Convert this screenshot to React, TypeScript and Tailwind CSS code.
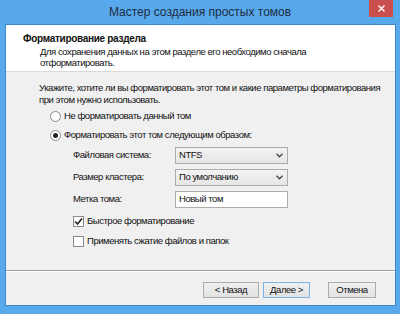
import React from "react";

const font = { fontFamily: '"Liberation Sans", Arial, sans-serif' };

function Radio({ checked, label }: { checked?: boolean; label: string }) {
  return (
    <div className="flex items-center h-[14px] gap-[3px]">
      <div className="w-[11px] h-[11px] rounded-full border border-[#8a8a8a] bg-white flex items-center justify-center">
        {checked && <div className="w-[5px] h-[5px] rounded-full bg-[#222]" />}
      </div>
      <span>{label}</span>
    </div>
  );
}

function Check({ checked, label }: { checked?: boolean; label: string }) {
  return (
    <div className="flex items-center h-[14px] gap-[3px]">
      <div className="w-[11px] h-[11px] border border-[#8a8a8a] bg-white flex items-center justify-center">
        {checked && (
          <svg width="9" height="9" viewBox="0 0 9 9">
            <path d="M1 4.5 L3.5 7 L8 1.5" stroke="#222" strokeWidth="1.6" fill="none" />
          </svg>
        )}
      </div>
      <span>{label}</span>
    </div>
  );
}

function Chevron() {
  return (
    <svg width="7" height="5" viewBox="0 0 7 5">
      <path d="M0.5 0.8 L3.5 3.8 L6.5 0.8" stroke="#444" strokeWidth="1.3" fill="none" />
    </svg>
  );
}

function Select({ value }: { value: string }) {
  return (
    <div className="w-[113px] h-[17px] border border-[#acacac] bg-gradient-to-b from-[#f3f3f3] to-[#e6e6e6] flex items-center justify-between pl-[3px] pr-[4px]">
      <span>{value}</span>
      <Chevron />
    </div>
  );
}

function Btn({ label, w, def }: { label: string; w: string; def?: boolean }) {
  return (
    <div
      className={`${w} h-[16px] border ${def ? "border-[#7fb2e6]" : "border-[#acacac]"} bg-gradient-to-b from-[#f0f0f0] to-[#e2e2e2] flex items-center justify-center`}
    >
      {label}
    </div>
  );
}

export default function App() {
  return (
    <div
      className="w-[400px] h-[314px] bg-[#58a8ec] flex flex-col text-[9.5px] tracking-[-0.45px] text-[#111] whitespace-nowrap"
      style={font}
    >
      <div className="h-[24px] relative flex items-center justify-center shrink-0">
        <span className="text-[12px] tracking-normal text-[#1c2c3e]">Мастер создания простых томов</span>
        <div className="absolute top-0 right-[7px] w-[24px] h-[17px] bg-[#c9504f] flex items-center justify-center">
          <svg width="7" height="7" viewBox="0 0 7 7">
            <path d="M0.5 0.5 L6.5 6.5 M6.5 0.5 L0.5 6.5" stroke="#fff" strokeWidth="1.4" />
          </svg>
        </div>
      </div>
      <div className="flex-1 ml-[5px] mr-[4px] mb-[8px] border border-[#3f86c9] flex flex-col">
        <div className="h-[47px] bg-white border-b border-[#d9d9d9] pl-[17px] pt-[8px] shrink-0">
          <div className="font-bold text-[10px] tracking-[-0.3px] leading-[12px]">Форматирование раздела</div>
          <div className="pl-[17px] leading-[11px] pt-[1px]">
            Для сохранения данных на этом разделе его необходимо сначала
            <br />
            отформатировать.
          </div>
        </div>
        <div className="flex-1 bg-[#f0f0f0] flex flex-col">
          <div className="h-[199px] pl-[33px] pt-[10px] border-b border-[#a0a0a0] shrink-0">
            <div className="leading-[12px]">
              Укажите, хотите ли вы форматировать этот том и какие параметры форматирования
              <br />
              при этом нужно использовать.
            </div>
            <div className="pl-[11px] pt-[3px] flex flex-col gap-[5px]">
              <Radio label="Не форматировать данный том" />
              <Radio checked label="Форматировать этот том следующим образом:" />
            </div>
            <div className="pl-[34px] pt-[5px] flex flex-col gap-[5px]">
              <div className="flex items-center h-[17px]">
                <span className="w-[102px]">Файловая система:</span>
                <Select value="NTFS" />
              </div>
              <div className="flex items-center h-[17px]">
                <span className="w-[102px]">Размер кластера:</span>
                <Select value="По умолчанию" />
              </div>
              <div className="flex items-center h-[17px]">
                <span className="w-[102px]">Метка тома:</span>
                <div className="w-[113px] h-[17px] border border-[#acacac] bg-white flex items-center pl-[3px]">
                  Новый том
                </div>
              </div>
              <div className="flex flex-col gap-[6px] pt-[1px]">
                <Check checked label="Быстрое форматирование" />
                <Check label="Применять сжатие файлов и папок" />
              </div>
            </div>
          </div>
          <div className="border-t border-white flex-1 flex items-start justify-end pt-[10px] pr-[19px]">
            <Btn label="< Назад" w="w-[56px]" />
            <div className="w-[4px]" />
            <Btn label="Далее >" w="w-[47px]" def />
            <div className="w-[18px]" />
            <Btn label="Отмена" w="w-[48px]" />
          </div>
        </div>
      </div>
    </div>
  );
}
